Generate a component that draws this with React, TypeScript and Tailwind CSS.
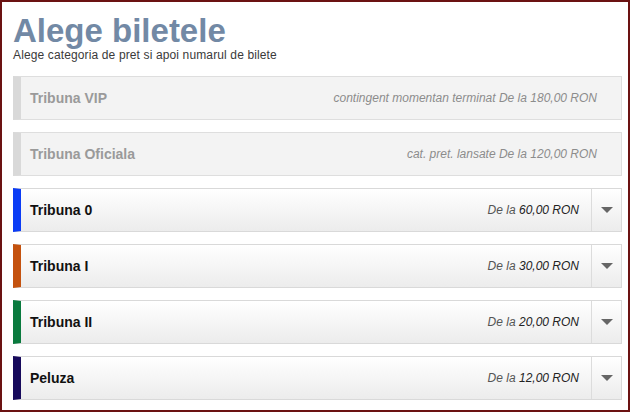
import React from "react";

type Category = {
  name: string;
  color: string;
  price: string;
  note?: string;
  available: boolean;
};

const categories: Category[] = [
  { name: "Tribuna VIP", color: "#d9d9d9", price: "180,00 RON", note: "contingent momentan terminat", available: false },
  { name: "Tribuna Oficiala", color: "#d9d9d9", price: "120,00 RON", note: "cat. pret. lansate", available: false },
  { name: "Tribuna 0", color: "#0b3cf5", price: "60,00 RON", available: true },
  { name: "Tribuna I", color: "#c4520f", price: "30,00 RON", available: true },
  { name: "Tribuna II", color: "#0a7a3e", price: "20,00 RON", available: true },
  { name: "Peluza", color: "#170a5c", price: "12,00 RON", available: true },
];

const CategoryRow = ({ cat }: { cat: Category }) => {
  if (!cat.available) {
    return (
      <div
        className="flex h-[44px] items-center border border-l-[8px] border-[#dedede] bg-[#f3f3f3] pl-[9px] pr-[24px]"
        style={{ borderLeftColor: cat.color }}
      >
        <span className="text-[14px] font-bold text-[#9a9a9a]">{cat.name}</span>
        <span className="ml-auto text-[12px] italic text-[#8c8c8c]">
          {cat.note} De la {cat.price}
        </span>
      </div>
    );
  }

  return (
    <div
      className="flex h-[44px] items-stretch border border-l-[8px] border-[#d9d9d9] bg-gradient-to-b from-white to-[#ececec]"
      style={{ borderLeftColor: cat.color }}
    >
      <div className="flex flex-1 items-center pl-[9px] pr-[12px]">
        <span className="text-[14px] font-bold text-[#111]">{cat.name}</span>
        <span className="ml-auto text-[12px] italic text-[#555]">
          De la <span className="text-[#222]">{cat.price}</span>
        </span>
      </div>
      <div className="flex w-[30px] items-center justify-center border-l border-[#dcdcdc]">
        <svg width="12" height="6" viewBox="0 0 12 6">
          <path d="M0 0h12L6 6z" fill="#666" />
        </svg>
      </div>
    </div>
  );
};

const App = () => {
  return (
    <div className="h-[412px] w-[630px] overflow-hidden border-2 border-[#6b1212] bg-white pl-[11px] pr-[6px] pt-[12px] font-['Liberation_Sans',Arial,sans-serif]">
      <h1 className="text-[33px] font-bold leading-[33px] text-[#7289a5]">Alege biletele</h1>
      <p className="mt-[1px] text-[12px] leading-[14px] tracking-[0.13px] text-[#3a3a3a]">
        Alege categoria de pret si apoi numarul de bilete
      </p>
      <div className="mt-[14px] flex flex-col gap-[12px]">
        {categories.map((cat) => (
          <CategoryRow key={cat.name} cat={cat} />
        ))}
      </div>
    </div>
  );
};

export default App;
